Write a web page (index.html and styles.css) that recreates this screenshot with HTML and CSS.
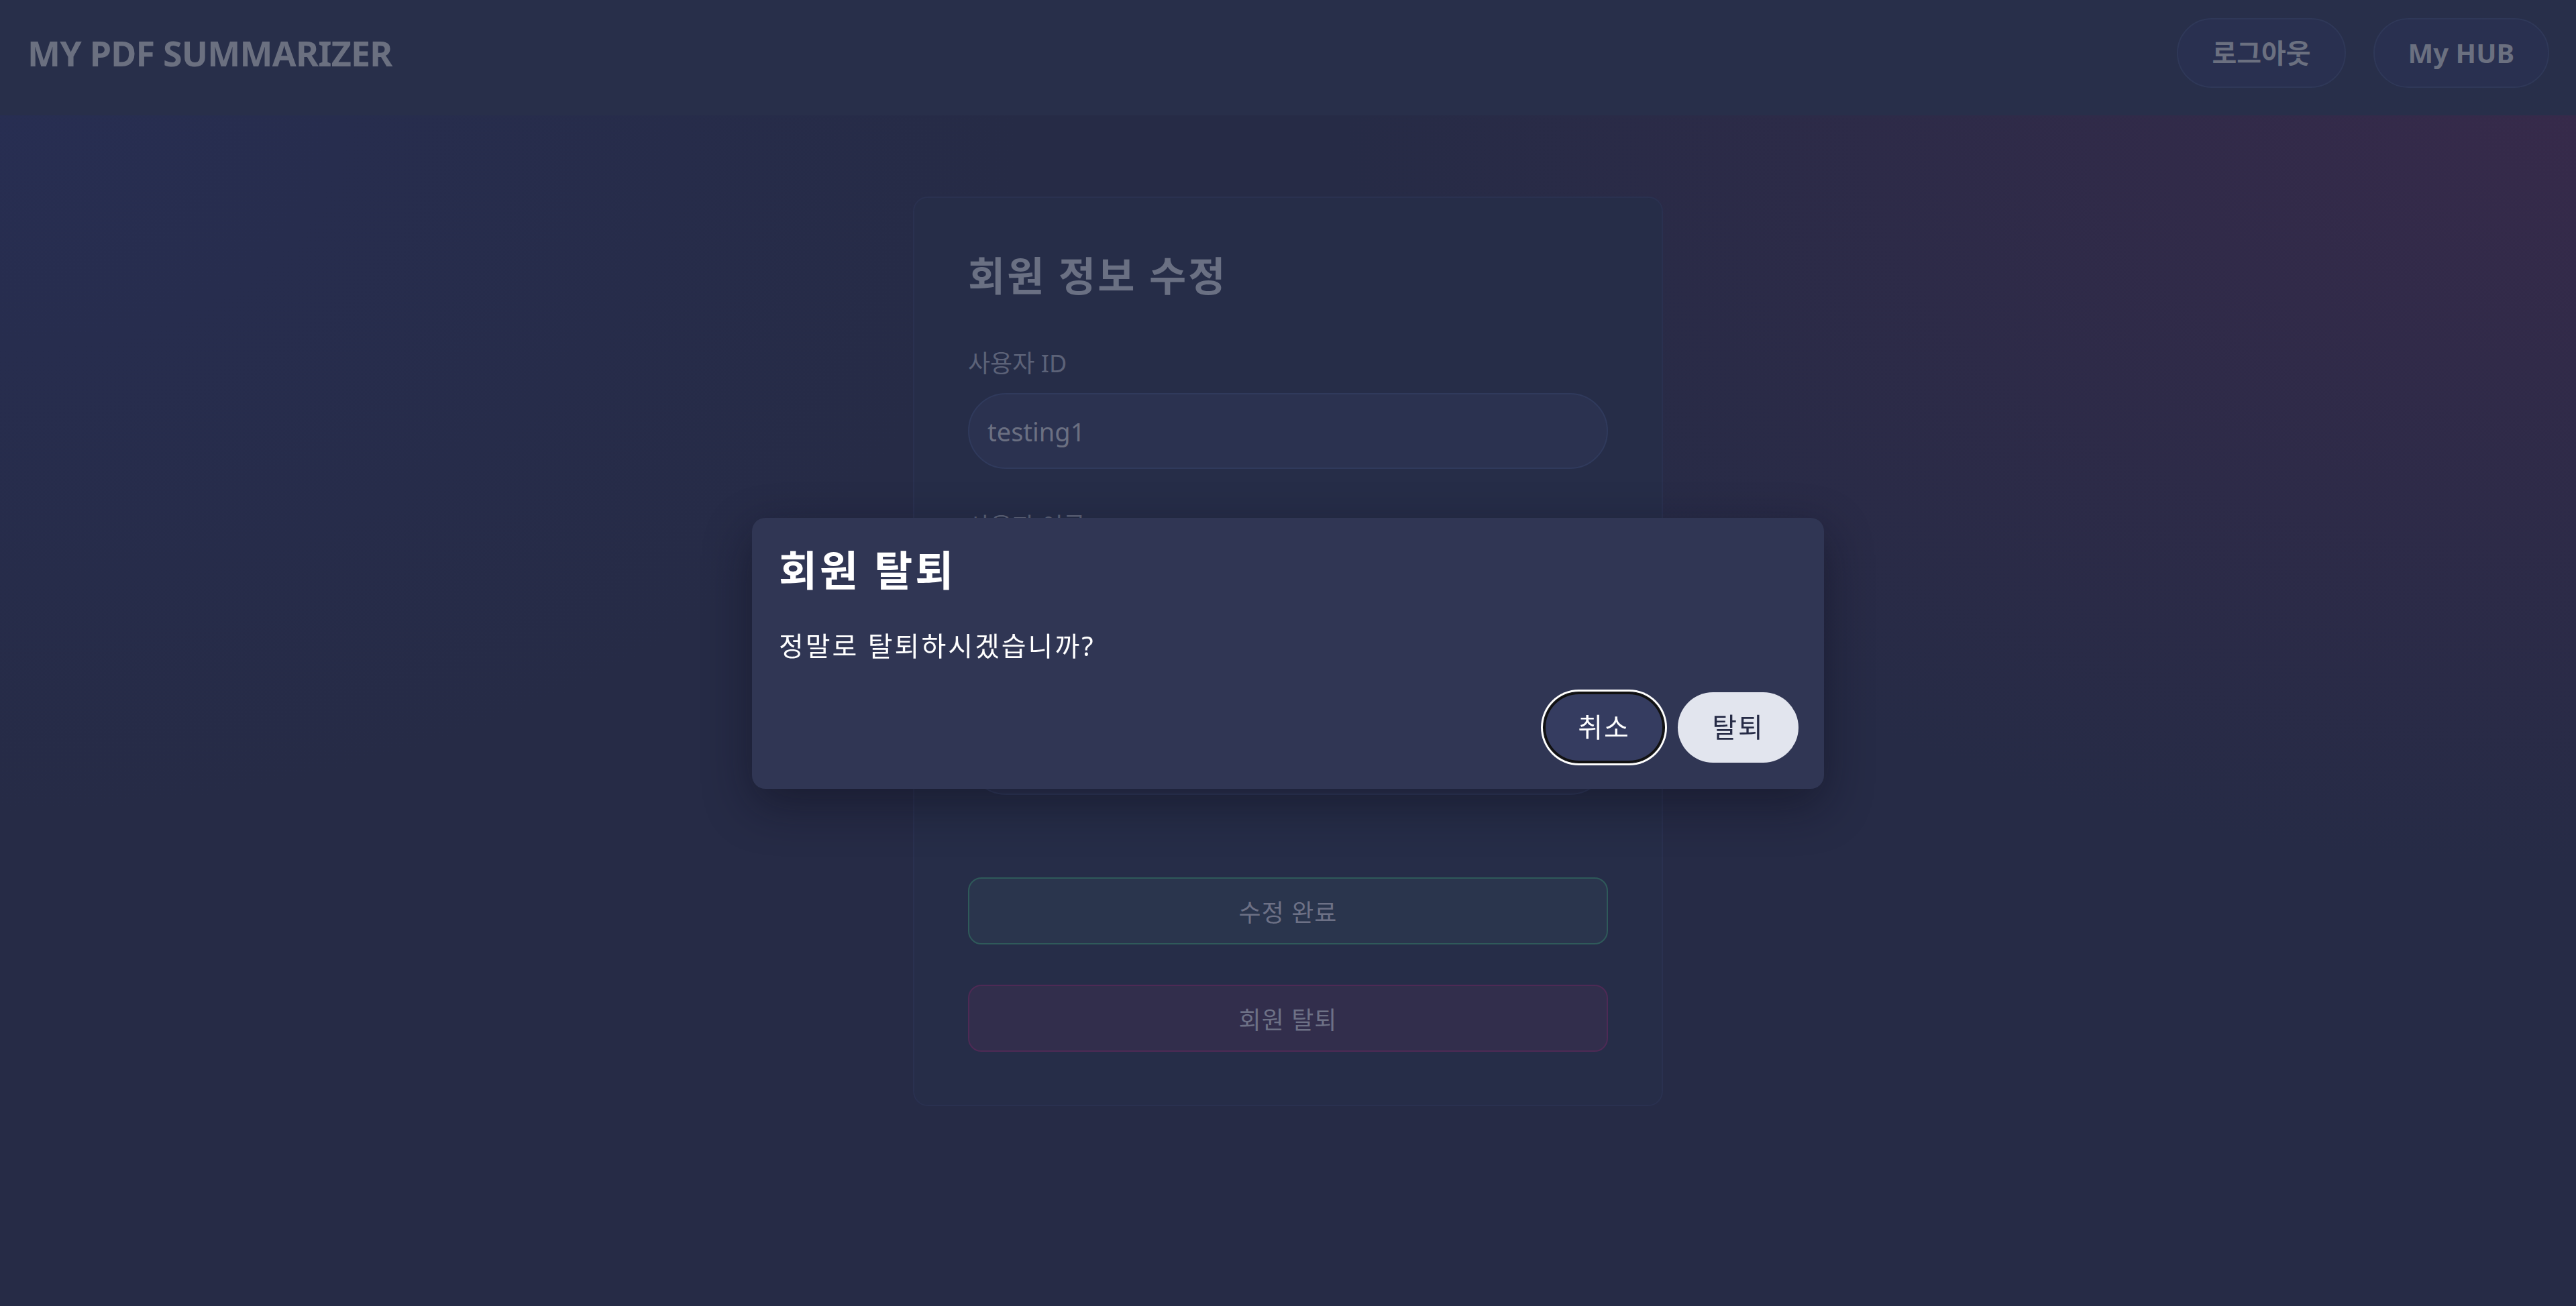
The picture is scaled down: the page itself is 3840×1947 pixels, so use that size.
FILE: index.html
```html
<!DOCTYPE html>
<html lang="ko">
<head>
<meta charset="utf-8">
<title>MY PDF SUMMARIZER</title>
<link rel="stylesheet" href="styles.css">
</head>
<body>
<header class="topbar">
  <div class="brand">MY PDF SUMMARIZER</div>
  <nav class="nav">
    <button class="nav-btn">로그아웃</button>
    <button class="nav-btn">My HUB</button>
  </nav>
</header>

<main class="page">
  <section class="card">
    <h2 class="card-title">회원 정보 수정</h2>
    <div class="field">
      <label class="label">사용자 ID</label>
      <div class="input">testing1</div>
    </div>
    <div class="field">
      <label class="label">사용자 이름</label>
      <div class="input">테스트</div>
    </div>
    <div class="field field-last">
      <label class="label">새 비밀번호</label>
      <div class="input"></div>
    </div>
    <div class="actions">
      <button class="wide-btn save">수정 완료</button>
      <button class="wide-btn leave">회원 탈퇴</button>
    </div>
  </section>
</main>

<div class="overlay">
  <div class="modal">
    <h3 class="modal-title">회원 탈퇴</h3>
    <p class="modal-text">정말로 탈퇴하시겠습니까?</p>
    <div class="modal-actions">
      <button class="modal-btn cancel">취소</button>
      <button class="modal-btn confirm">탈퇴</button>
    </div>
  </div>
</div>
</body>
</html>
```

FILE: styles.css
```css
* { box-sizing: border-box; }

html, body {
  margin: 0;
  padding: 0;
}

body {
  width: 3840px;
  min-height: 1947px;
  font-family: "Noto Sans", "Noto Sans CJK KR", sans-serif;
  background:
    radial-gradient(ellipse 2300px 1400px at 3840px 173px, rgba(60, 42, 76, 0.75), rgba(60, 42, 76, 0) 80%),
    radial-gradient(ellipse 1900px 1300px at 0px 173px, rgba(40, 47, 86, 0.75), rgba(40, 47, 86, 0) 80%),
    #262b46;
  color: #6b7080;
}

.topbar {
  height: 172px;
  padding: 27px 40px 41px 41px;
  display: flex;
  align-items: center;
  justify-content: space-between;
  background: #282f4a;
}

.brand {
  font-size: 52px;
  font-weight: 700;
  line-height: 60px;
  color: #6b7080;
  letter-spacing: -0.8px;
}

.nav {
  display: flex;
  gap: 41px;
}

.nav-btn {
  height: 104px;
  padding: 0 50px;
  border-radius: 52px;
  border: 2px solid #2f3858;
  background: #293050;
  color: #6b7080;
  font-family: inherit;
  font-size: 40px;
  font-weight: 700;
  line-height: 1;
}

.page {
  padding-top: 121px;
  display: flex;
  justify-content: center;
}

.card {
  width: 1118px;
  padding: 80px 80px 79px;
  border-radius: 22px;
  background: #262d48;
  border: 2px solid #2a3150;
}

.card-title {
  margin: 0 0 73px;
  font-size: 60px;
  line-height: 72px;
  font-weight: 700;
  letter-spacing: 3px;
  color: #6a7083;
}

.field {
  display: flex;
  flex-direction: column;
  gap: 22px;
  margin-bottom: 64px;
}

.field-last { margin-bottom: 123px; }

.label {
  font-size: 36px;
  line-height: 44px;
  color: #5c6278;
}

.input {
  height: 113px;
  border-radius: 57px;
  border: 2px solid #303a5c;
  background: #2b3250;
  padding: 0 27px;
  display: flex;
  align-items: center;
  font-size: 38px;
  color: #6b7082;
}

.actions {
  display: flex;
  flex-direction: column;
  gap: 60px;
}

.wide-btn {
  height: 100px;
  border-radius: 20px;
  font-family: inherit;
  font-size: 36px;
  letter-spacing: 1px;
  color: #6d7186;
}

.save {
  background: #2a354d;
  border: 2px solid #2f5a5a;
}

.leave {
  background: #322e4c;
  border: 2px solid #4e2a55;
}

.overlay {
  position: fixed;
  inset: 0;
  display: flex;
  align-items: center;
  justify-content: center;
  background: rgba(12, 14, 28, 0.0);
}

.modal {
  width: 1598px;
  padding: 42px 38px 39px 40px;
  border-radius: 20px;
  background: #303654;
  box-shadow: 0 24px 70px rgba(10, 12, 24, 0.45);
}

.modal-title {
  margin: 0 0 53px;
  font-size: 62px;
  line-height: 72px;
  font-weight: 700;
  letter-spacing: 4px;
  color: #ffffff;
}

.modal-text {
  margin: 0 0 45px;
  font-size: 40px;
  line-height: 48px;
  letter-spacing: 3px;
  color: #ffffff;
}

.modal-actions {
  display: flex;
  justify-content: flex-end;
  gap: 20px;
}

.modal-btn {
  width: 180px;
  height: 105px;
  border-radius: 53px;
  border: none;
  font-family: inherit;
  font-size: 40px;
  line-height: 1;
  letter-spacing: 2px;
}

.cancel {
  background: #353c60;
  color: #ffffff;
  box-shadow: inset 0 0 0 3px #111111, 0 0 0 1px #111111, 0 0 0 4px #ffffff;
}

.confirm {
  background: #e2e5ee;
  color: #262b46;
}
```
